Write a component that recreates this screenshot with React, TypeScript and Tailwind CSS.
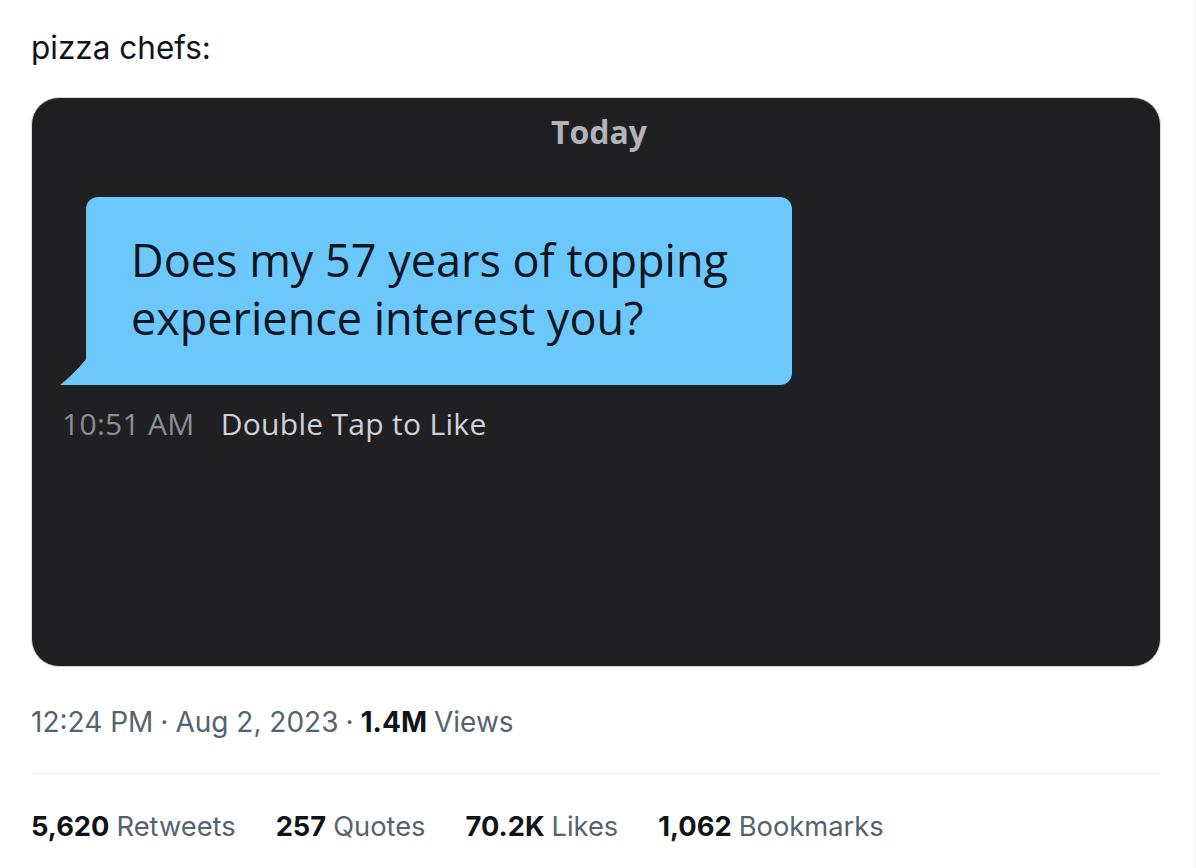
const stats = [
  { n: '5,620', label: 'Retweets' },
  { n: '257', label: 'Quotes' },
  { n: '70.2K', label: 'Likes' },
  { n: '1,062', label: 'Bookmarks' },
];

function ChatImage() {
  return (
    <div className="h-[570px] overflow-hidden rounded-[28px] border border-[#cfd9de] bg-[#202023] font-['Open_Sans',sans-serif]">
      <div className="pt-[10px] pl-[6px] text-center text-[32px] font-bold text-[#b3b3b8]">Today</div>
      <div className="relative ml-[54px] mt-[41px] w-[706px]">
        <div className="rounded-[12px] rounded-bl-none bg-[#6cc7fb] px-[45px] pt-[34px] pb-[38px] text-[45px] leading-[58px] font-medium text-[#0a1622]">
          Does my 57 years of topping
          <br />
          experience interest you?
        </div>
        <svg className="absolute bottom-0 -left-[26px]" width="27" height="27" viewBox="0 0 27 27">
          <path d="M27 0 L27 27 L0 27 Q14 16 27 0 Z" fill="#6cc7fb" />
        </svg>
      </div>
      <div className="mt-[16px] ml-[30px] flex items-baseline gap-[26px] text-[30px] tracking-[0.01em]">
        <span className="text-[#8e8e93]">10:51 AM</span>
        <span className="font-medium text-[#d2d2d6]">Double Tap to Like</span>
      </div>
    </div>
  );
}

export default function App() {
  return (
    <div className="min-h-screen bg-white font-['Inter',sans-serif] text-[#0f1419]">
      <div className="min-h-[868px] border-r border-[#eff3f4] pl-[31px] pr-[34px] pt-[26px]">
        <p className="text-[31.5px] leading-[44px]">pizza chefs:</p>
        <div className="mt-[27px]">
          <ChatImage />
        </div>
        <div className="mt-[34px] flex items-baseline text-[28px] text-[#536471]">
          <span>12:24 PM</span>
          <span className="mx-[7px]">·</span>
          <span>Aug 2, 2023</span>
          <span className="mx-[7px]">·</span>
          <span className="font-bold text-[#0f1419]">1.4M</span>
          <span className="ml-[7px]">Views</span>
        </div>
        <div className="mt-[30px] border-t border-[#eff3f4]" />
        <div className="mt-[33px] flex gap-[40px] text-[27.3px]">
          {stats.map((s) => (
            <div key={s.label} className="flex items-baseline gap-[7px]">
              <span className="font-bold text-[#0f1419]">{s.n}</span>
              <span className="text-[#536471]">{s.label}</span>
            </div>
          ))}
        </div>
      </div>
    </div>
  );
}
